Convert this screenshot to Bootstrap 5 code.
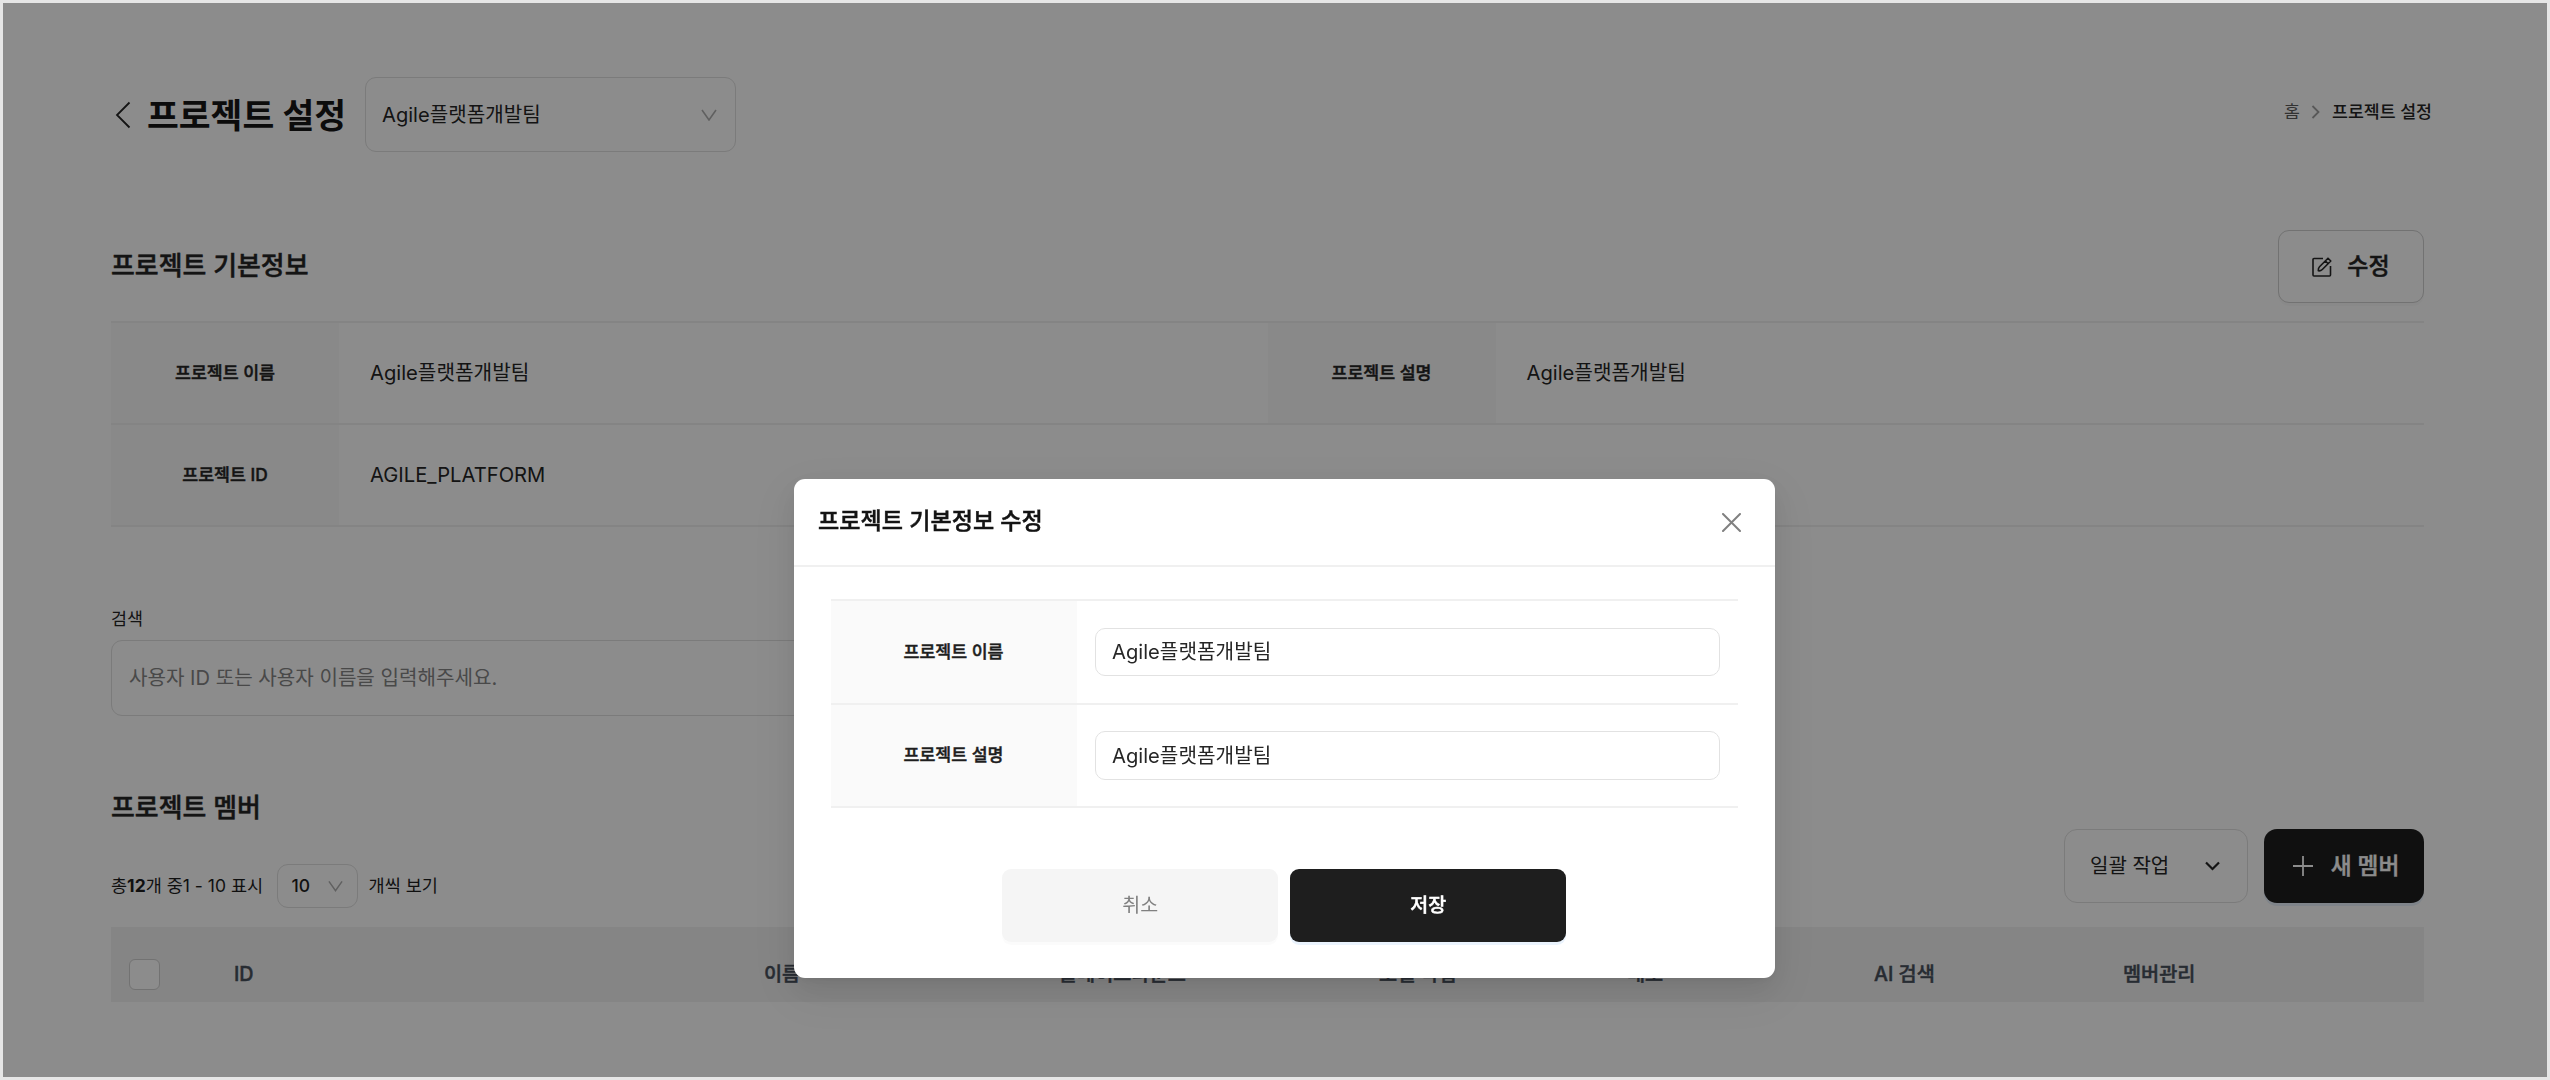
<!DOCTYPE html>
<html lang="ko">
<head>
<meta charset="utf-8">
<title>프로젝트 설정</title>
<link href="https://cdn.jsdelivr.net/npm/bootstrap@5.3.0/dist/css/bootstrap.min.css" rel="stylesheet">
<style>
  body { margin: 0; background: #fff; font-family: Inter, "Noto Sans CJK KR", sans-serif; color: #262626; font-size: 20.1px; line-height: 30px; }
  svg { fill: none; stroke: currentColor; flex: none; display: block; }
  .page { width: 2550px; height: 1080px; overflow: hidden; padding: 77px 126px 0 111px; }
  .page-head { height: 75px; }
  .page-title { font-size: 34.6px; font-weight: 700; color: #161616; margin: 0 0 0 16px; line-height: 40px; }
  .semi { font-weight: 500; -webkit-text-stroke: .45px currentColor; }
  .box { border: 1.5px solid #e0e0e0; border-radius: 11px; background: #fff; }
  .team-select { width: 371px; height: 75px; margin-left: 19px; padding: 0 18px 0 16px; }
  .muted { color: #b0b0b0; }
  .crumbs { font-size: 17.3px; margin: 0 -8px 5px 0; }
  .crumbs .sep { margin: 0 9px; color: #a0a0a0; }
  .crumbs .home { color: #5c5c5c; }
  .block { width: 2313px; }
  .basic { margin-top: 78px; }
  .section-title { font-size: 25.9px; margin: 0; line-height: 34px; }
  .basic .section-title { padding-bottom: 2px; }
  .btn-edit { width: 146px; height: 73px; gap: 15px; font-size: 23px; border-color: #cfcfcf; box-shadow: 0 3px 0 rgba(0,0,0,.02); color: #262626; }
  .info-grid { border-top: 2px solid #f0f0f0; margin-top: 18px; }
  .info-line { height: 102px; border-bottom: 2px solid #f0f0f0; }
  .th-cell { width: 228px; background: #fafafa; font-size: 17.3px; }
  .td-cell { width: 928.5px; padding-left: 31px; font-size: 20.2px; }
  .search-label { font-size: 17.4px; line-height: 24px; margin: 80px 0 9px; }
  .search-box { width: 1140px; height: 76px; padding: 0 17px; color: #858585; }
  .member-head { height: 192px; }
  .member-head .section-title { margin-bottom: 39px; }
  .toolbar { height: 44px; font-size: 17.5px; color: #1e1e1e; }
  .size-select { width: 81px; height: 44px; margin: 0 11px 0 13.5px; padding: 0 14px; font-weight: 500; }
  .actions { margin-bottom: 5px; }
  .batch { width: 184px; height: 74px; padding: 0 27px 0 25px; border-radius: 13px; font-size: 20px; }
  .btn-new { width: 160px; height: 74px; gap: 18px; padding: 0 0 0 4px; border-radius: 13px; background: #1e1e1e; color: #fff; font-size: 22.7px; box-shadow: 0 3px 0 #e8f1fb; border: 0; }
  .head-row { height: 75px; margin-top: 19px; background: #f2f2f2; color: #48505c; font-size: 19.7px; padding-top: 19px; }
  .check { width: 31px; height: 31px; border: 1.5px solid #d0d0d0; border-radius: 6px; background: #fff; margin-left: 18px; }
  .c-check { width: 123px; } .c-id { width: 530px; } .c-name { width: 295px; } .c-play { width: 320px; }
  .c-model { width: 248px; } .c-deploy { width: 247px; } .c-ai { width: 249px; }
  .dim { position: fixed; inset: 0; background: rgba(0,0,0,.45); }
  .edge { position: fixed; inset: 0; border: 3px solid #e6e6e6; z-index: 2000; pointer-events: none; }
  .modal-dialog.edit-dialog { max-width: none; width: 981px; height: 499px; margin: 479px 0 0 794px; }
  .edit-dialog .modal-content { height: 499px; border: 0; border-radius: 11px; box-shadow: 0 10px 27px rgba(0,0,0,.08), 0 5px 10px -6px rgba(0,0,0,.12), 0 15px 47px 13px rgba(0,0,0,.05); color: #262626; }
  .edit-dialog .modal-header { height: 88px; padding: 0 34px 0 24px; border-bottom: 2px solid #f0f0f0; border-radius: 0; }
  .edit-title { font-size: 23.1px; color: #141414; margin: 0; }
  .edit-dialog .modal-body { padding: 32px 37px 0 36.5px; }
  .form-rows { border-top: 2px solid #f0f0f0; }
  .form-line { height: 103.5px; border-bottom: 2px solid #f0f0f0; }
  .form-th { width: 246px; background: #fafafa; font-size: 17.3px; color: #1e1e1e; }
  .form-line .form-control { width: 625px; height: 48.5px; margin-left: 18px; padding: 0 16.5px 2px; border: 1.5px solid #e2e2e2; border-radius: 10px; font-size: 20.2px; color: #262626; }
  .dlg-btn { width: 276px; height: 73px; border: 0; border-radius: 9px; font-size: 19.5px; }
  .dlg-cancel { background: #f5f5f5 !important; color: #808080; box-shadow: 0 3px 0 rgba(0,0,0,.015); }
  .dlg-save { background: #1e1e1e; color: #fff; box-shadow: 0 3px 0 #eaf3fd; }
  .dlg-actions { margin-top: 61px; gap: 12px; }
</style>
</head>
<body>
<main class="page">
  <header class="page-head d-flex align-items-center">
    <svg width="20" height="28" viewBox="0 0 20 28" stroke-width="1.8"><path d="M18.500 1.500 6 14 18.500 26.500"/></svg>
    <h1 class="page-title">프로젝트 설정</h1>
    <div class="box team-select d-flex align-items-center justify-content-between">
      <span>Agile플랫폼개발팀</span>
      <svg class="muted" width="16" height="12" viewBox="0 0 16 12" stroke-width="1.6"><path d="M1 1l7 10 7-10"/></svg>
    </div>
    <nav class="crumbs ms-auto d-flex align-items-center">
      <span class="home">홈</span>
      <svg class="sep" width="14" height="14" viewBox="0 0 14 14" stroke-width="1.8"><path d="M3.500 1l6 6-6 6"/></svg>
      <span class="fw-medium" style="font-weight:500">프로젝트 설정</span>
    </nav>
  </header>

  <section class="block basic">
    <div class="d-flex align-items-center justify-content-between">
      <h2 class="section-title semi">프로젝트 기본정보</h2>
      <button class="btn box btn-edit semi d-flex align-items-center justify-content-center p-0">
        <svg width="20" height="20" viewBox="0 0 20 20" stroke-width="1.6" stroke-linejoin="round"><path d="M11 1.500H2a1 1 0 0 0-1 1V18a1 1 0 0 0 1 1h15.500a1 1 0 0 0 1-1V9"/><path d="M16 1.200l2.800 2.800-8.500 8.500c-1 1-2.500 1.500-4 1.300-.1-1.500.2-3 1.200-4zM13.300 3.900l2.800 2.800"/></svg>
        <span>수정</span>
      </button>
    </div>
    <div class="info-grid">
      <div class="info-line d-flex">
        <div class="th-cell semi d-flex align-items-center justify-content-center">프로젝트 이름</div>
        <div class="td-cell d-flex align-items-center">Agile플랫폼개발팀</div>
        <div class="th-cell semi d-flex align-items-center justify-content-center">프로젝트 설명</div>
        <div class="td-cell d-flex align-items-center">Agile플랫폼개발팀</div>
      </div>
      <div class="info-line d-flex">
        <div class="th-cell semi d-flex align-items-center justify-content-center">프로젝트 ID</div>
        <div class="td-cell d-flex align-items-center">AGILE_PLATFORM</div>
      </div>
    </div>
  </section>

  <section class="block">
    <div class="search-label">검색</div>
    <div class="box search-box d-flex align-items-center">사용자 ID 또는 사용자 이름을 입력해주세요.</div>
  </section>

  <section class="block">
    <div class="member-head d-flex align-items-end justify-content-between">
      <div>
        <h2 class="section-title semi">프로젝트 멤버</h2>
        <div class="toolbar d-flex align-items-center">
          <span>총<b>12</b>개 중1 - 10 표시</span>
          <div class="box size-select d-flex align-items-center justify-content-between">
            <span>10</span>
            <svg class="muted" width="15" height="12" viewBox="0 0 16 12" stroke-width="1.6"><path d="M1 1l7 10 7-10"/></svg>
          </div>
          <span>개씩 보기</span>
        </div>
      </div>
      <div class="actions d-flex gap-3">
        <div class="box batch d-flex align-items-center justify-content-between">
          <span>일괄 작업</span>
          <svg width="15" height="10" viewBox="0 0 15 10" stroke-width="2.200"><path d="M1 1.500l6.500 6.500 6.500-6.500"/></svg>
        </div>
        <button class="btn btn-new d-flex align-items-center justify-content-center">
          <svg width="20" height="22" viewBox="0 0 20 22" stroke-width="1.800"><path d="M10 1v20M0 11h20"/></svg>
          <span class="semi">새 멤버</span>
        </button>
      </div>
    </div>
    <div class="head-row semi d-flex align-items-center">
      <div class="c-check"><div class="check"></div></div>
      <div class="c-id">ID</div>
      <div class="c-name">이름</div>
      <div class="c-play">플레이그라운드</div>
      <div class="c-model">모델 작업</div>
      <div class="c-deploy">배포</div>
      <div class="c-ai">AI 검색</div>
      <div>멤버관리</div>
    </div>
  </section>
</main>

<div class="dim"></div>
<div class="modal show d-block" tabindex="-1">
  <div class="modal-dialog edit-dialog">
    <div class="modal-content">
      <div class="modal-header d-flex align-items-center justify-content-between">
        <h3 class="edit-title semi">프로젝트 기본정보 수정</h3>
        <svg width="19" height="19" viewBox="0 0 19 19" stroke-width="2" stroke-linecap="round" style="color:#808080"><path d="M1 1l17 17M18 1L1 18"/></svg>
      </div>
      <div class="modal-body">
        <div class="form-rows">
          <div class="form-line d-flex align-items-center">
            <div class="form-th semi h-100 d-flex align-items-center justify-content-center">프로젝트 이름</div>
            <input class="form-control" value="Agile플랫폼개발팀">
          </div>
          <div class="form-line d-flex align-items-center">
            <div class="form-th semi h-100 d-flex align-items-center justify-content-center">프로젝트 설명</div>
            <input class="form-control" value="Agile플랫폼개발팀">
          </div>
        </div>
        <div class="dlg-actions d-flex justify-content-center">
          <button class="btn dlg-btn dlg-cancel">취소</button>
          <button class="btn dlg-btn dlg-save semi">저장</button>
        </div>
      </div>
    </div>
  </div>
</div>
<div class="edge"></div>
<script src="https://cdn.jsdelivr.net/npm/bootstrap@5.3.0/dist/js/bootstrap.bundle.min.js"></script>
</body>
</html>
